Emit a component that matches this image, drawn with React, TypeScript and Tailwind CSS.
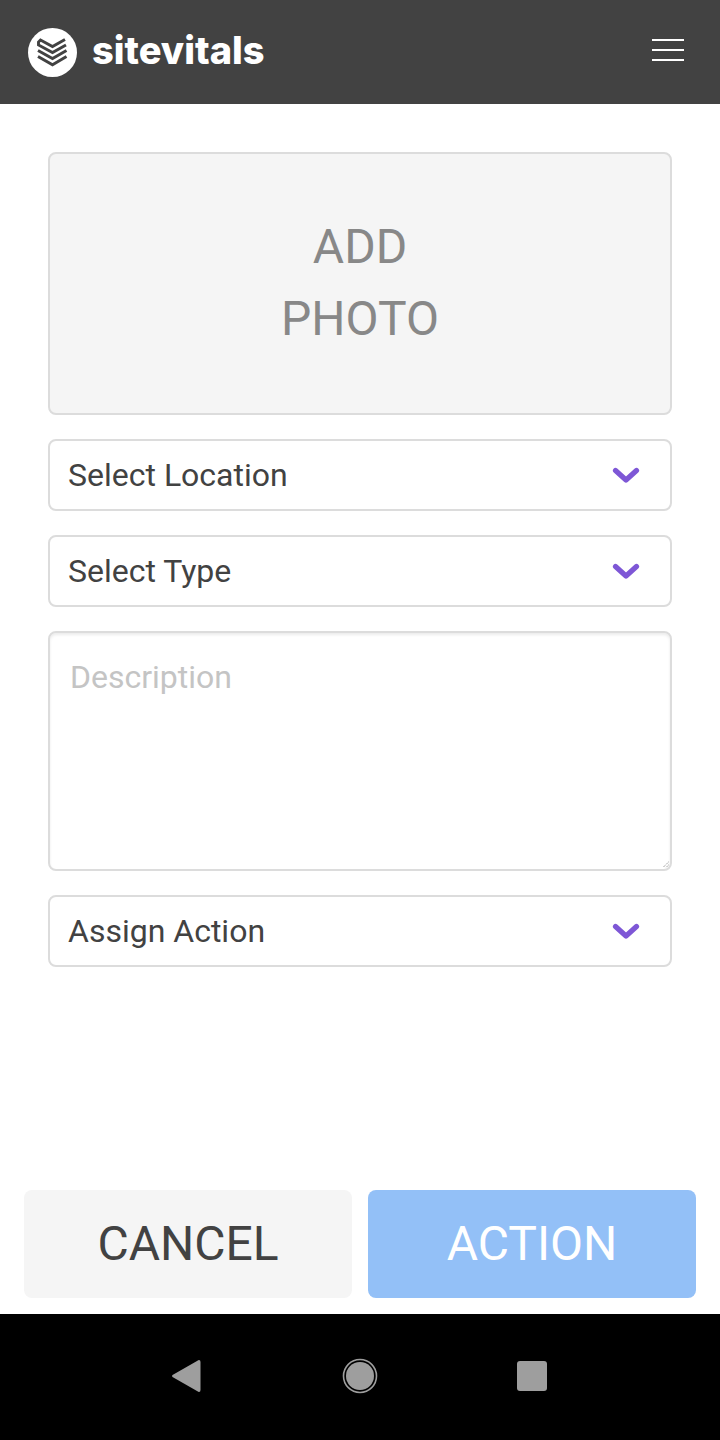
import React from "react";

function Chevron() {
  return (
    <svg width="28" height="20" viewBox="0 0 28 20" fill="none" className="shrink-0">
      <path d="M3.5 5.5 L14 15 L24.5 5.5" stroke="#7e57d6" strokeWidth="5.2" strokeLinecap="round" strokeLinejoin="round" />
    </svg>
  );
}

function SelectRow({ label }: { label: string }) {
  return (
    <div className="flex h-[72px] items-center justify-between rounded-lg border-2 border-[#dcdcdc] bg-white pl-[18px] pr-[30px]">
      <span className="text-[32px] leading-[40px] text-[#424242]">{label}</span>
      <Chevron />
    </div>
  );
}

export default function App() {
  return (
    <div className="flex h-[1440px] w-[720px] flex-col bg-white font-['Roboto',sans-serif]">
      <header className="flex h-[104px] shrink-0 items-center justify-between bg-[#424242] pl-[28px] pr-[36px]">
        <div className="flex items-center gap-[15px]">
          <svg width="49" height="49" viewBox="0 0 49 49">
            <circle cx="24.5" cy="24.5" r="24.5" fill="#fff" />
            <g fill="none" stroke="#424242" strokeWidth="2.9" strokeLinejoin="miter">
              <path d="M37 11.5 L24.5 18.5 L12.5 12 L10.5 14 V17 L24.5 24.5 L38 17" />
              <path d="M10 22.5 L24.5 30.5 L38.5 22.5" />
              <path d="M10 28.5 L24.5 36.8 L38.5 28.5" />
            </g>
          </svg>
          <span className="-mt-1 font-['Inter',sans-serif] text-[38px] font-extrabold leading-none text-white">sitevitals</span>
        </div>
        <div className="-mt-1 flex w-8 flex-col gap-2">
          <div className="h-0.5 bg-white" />
          <div className="h-0.5 bg-white" />
          <div className="h-0.5 bg-white" />
        </div>
      </header>

      <main className="flex flex-1 flex-col justify-between">
        <form className="flex flex-col gap-6 px-12 pt-12">
          <div className="flex h-[263px] flex-col items-center justify-center rounded-lg border-2 border-[#dcdcdc] bg-[#f5f5f5] pb-[2px] text-[48px] leading-[72px] text-[#888888]">
            <span>ADD</span>
            <span>PHOTO</span>
          </div>
          <SelectRow label="Select Location" />
          <SelectRow label="Select Type" />
          <div className="relative">
            <textarea
              placeholder="Description"
              className="block h-[240px] w-full resize-none rounded-lg border-2 border-[#dcdcdc] bg-white px-5 py-[22px] text-[32px] leading-[44px] text-[#424242] shadow-[inset_0_2px_3px_rgba(0,0,0,0.08)] outline-none placeholder:text-[#c4c4c4]"
            />
            <svg width="7" height="7" viewBox="0 0 7 7" className="pointer-events-none absolute bottom-[3px] right-[3px]">
              <path d="M6.5 1 L1 6.5 M6.5 4 L4 6.5" stroke="#7a7a7a" strokeWidth="1" strokeDasharray="1 1" fill="none" />
            </svg>
          </div>
          <SelectRow label="Assign Action" />
        </form>
        <div className="flex gap-4 px-6 pb-4">
          <button className="flex h-[108px] flex-1 items-center justify-center rounded-lg bg-[#f5f5f5] text-[48px] text-[#424242]">CANCEL</button>
          <button className="flex h-[108px] flex-1 items-center justify-center rounded-lg bg-[#93c0f7] text-[48px] text-white">ACTION</button>
        </div>
      </main>

      <nav className="flex h-[126px] shrink-0 items-center justify-center bg-black pb-[2px] pr-[2px]">
        <svg width="30" height="34" viewBox="0 0 30 34" fill="#9e9e9e" className="mr-[141px]">
          <path d="M28 1 Q29.5 1 29.5 3 V31 Q29.5 33 28 33 Q27.5 33 26 32 L1.5 18 Q0.5 17 1.5 16 L26 2 Q27.5 1 28 1 Z" />
        </svg>
        <svg width="36" height="36" viewBox="0 0 36 36" className="mr-[139px]">
          <circle cx="18" cy="18" r="16.5" fill="none" stroke="#9e9e9e" strokeWidth="1.6" />
          <circle cx="18" cy="18" r="14" fill="#9e9e9e" />
        </svg>
        <div className="h-[30px] w-[30px] rounded-[3px] bg-[#9e9e9e]" />
      </nav>
    </div>
  );
}
